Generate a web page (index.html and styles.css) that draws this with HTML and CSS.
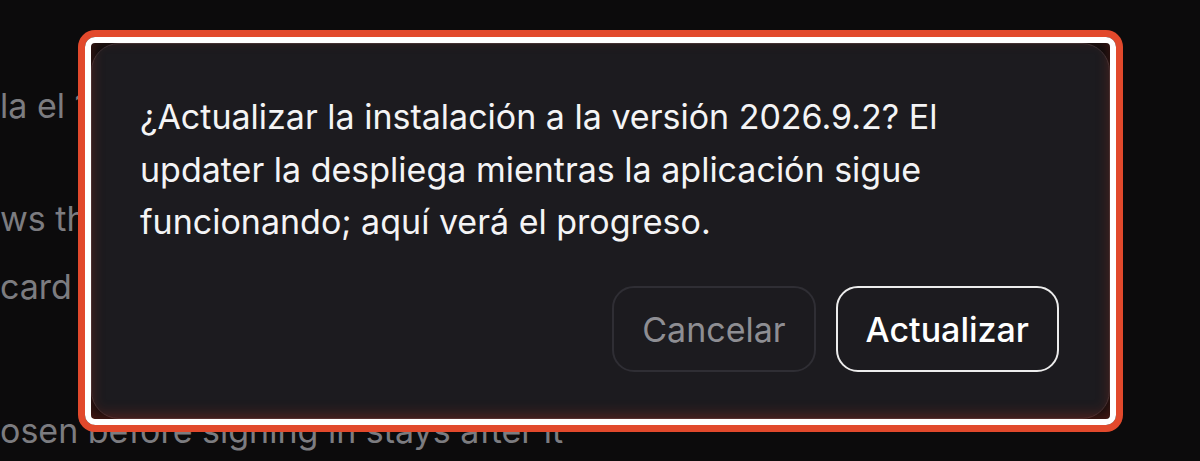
FILE: index.html
```html
<!DOCTYPE html>
<html lang="es">
<head>
<meta charset="utf-8">
<title>Actualizar</title>
<link rel="stylesheet" href="styles.css">
</head>
<body>
<main class="page">
  <p class="bg-line l1">la el 15</p>
  <p class="bg-line l2">ws the</p>
  <p class="bg-line l3">card</p>
  <p class="bg-line l4">osen before signing in stays after it</p>
</main>

<div class="modal-layer">
  <div class="dialog" role="dialog" aria-modal="true">
    <p class="dialog-text">¿Actualizar la instalación a la versión 2026.9.2? El updater la despliega mientras la aplicación sigue funcionando; aquí verá el progreso.</p>
    <div class="dialog-actions">
      <button class="btn btn-cancel" type="button">Cancelar</button>
      <button class="btn btn-primary" type="button">Actualizar</button>
    </div>
  </div>
  <div class="highlight"></div>
</div>
</body>
</html>
```

FILE: styles.css
```css
html, body {
  margin: 0;
  padding: 0;
  background: #0c0b0c;
  height: 100%;
  overflow: hidden;
}

body {
  font-family: Inter, "Noto Sans", "Liberation Sans", sans-serif;
  color: #f2f2f2;
}

.page {
  padding-top: 80px;
  display: flex;
  flex-direction: column;
}

.bg-line {
  margin: 0;
  font-size: 34px;
  line-height: 52px;
  color: #7c7c80;
  white-space: nowrap;
}

.l2 { margin-top: 61px; }
.l3 { margin-top: 16px; }
.l4 { margin-top: 92px; }

.modal-layer {
  position: fixed;
  inset: 0;
}

.dialog {
  position: absolute;
  left: 91px;
  top: 43px;
  width: 1019px;
  height: 376px;
  box-sizing: border-box;
  background: #1c1b1f;
  border: 1px solid #3a3236;
  border-radius: 28px;
  padding: 47px 50px 46px 48px;
  display: flex;
  flex-direction: column;
}

.dialog-text {
  margin: 0;
  font-size: 34px;
  line-height: 52.5px;
  color: #f4f4f5;
}

.dialog-actions {
  margin-top: auto;
  display: flex;
  justify-content: flex-end;
  gap: 20px;
}

.btn {
  font-family: inherit;
  font-size: 34px;
  height: 86px;
  padding: 0 28px;
  border-radius: 22px;
  background: transparent;
  display: flex;
  align-items: center;
  box-sizing: border-box;
}

.btn-cancel {
  border: 2px solid #2f2e34;
  color: #8e8e93;
  font-weight: 400;
}

.btn-primary {
  border: 2px solid #ececec;
  color: #ffffff;
  font-weight: 500;
}

.highlight {
  position: absolute;
  left: 85px;
  top: 37px;
  width: 1031px;
  height: 388px;
  box-sizing: border-box;
  border: 6px solid #ffffff;
  border-radius: 10px;
  box-shadow: 0 0 0 7px #e2492c, inset 0 -4px 14px rgba(150, 45, 30, 0.45);
  pointer-events: none;
}
```
